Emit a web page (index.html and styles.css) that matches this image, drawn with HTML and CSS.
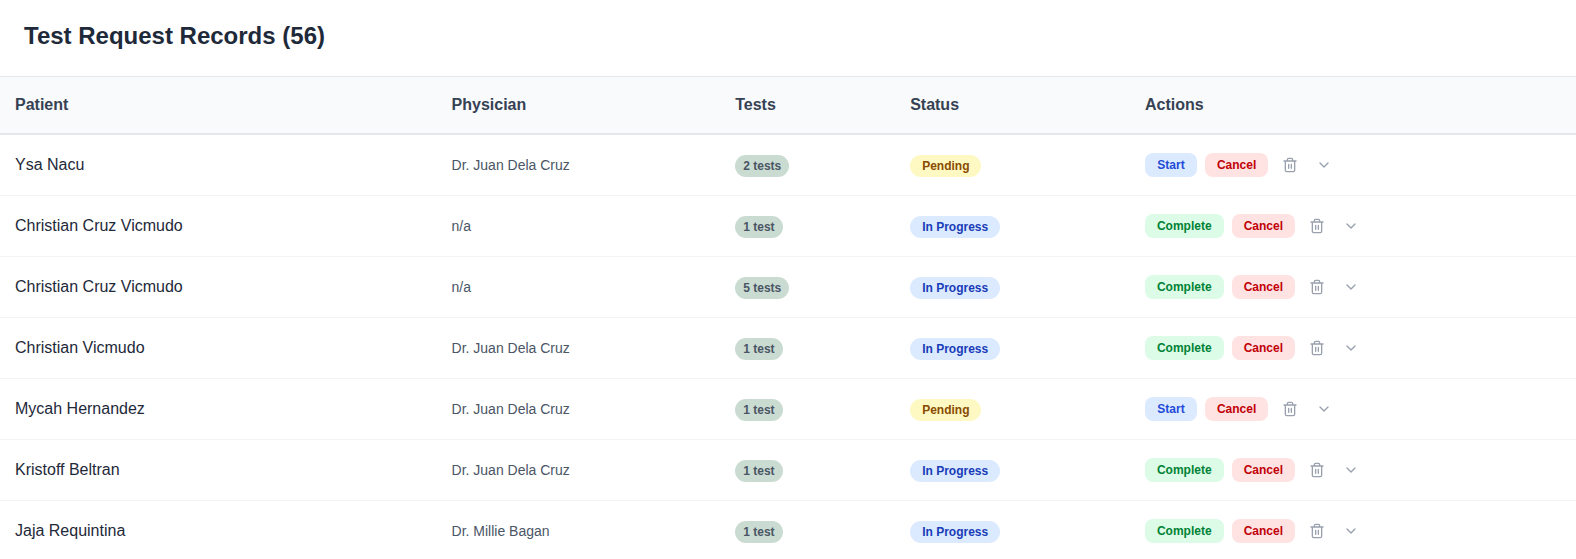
FILE: index.html
```html
<!DOCTYPE html>
<html lang="en">
<head>
<meta charset="utf-8">
<meta name="viewport" content="width=device-width, initial-scale=1">
<title>Test Request Records</title>
<link rel="stylesheet" href="styles.css">
</head>
<body>
<svg class="sprite" aria-hidden="true">
  <symbol id="trash" viewBox="0 0 24 24"><path d="M3 6h18M19 6v14a2 2 0 0 1-2 2H7a2 2 0 0 1-2-2V6M8 6V4a2 2 0 0 1 2-2h4a2 2 0 0 1 2 2v2M10 11v6M14 11v6"/></symbol>
  <symbol id="chevron" viewBox="0 0 24 24"><path d="m6 9 6 6 6-6"/></symbol>
</svg>
<main>
  <header class="page-header"><h1 class="title">Test Request Records (56)</h1></header>
  <table class="records">
    <colgroup><col class="col-patient"><col class="col-physician"><col class="col-tests"><col class="col-status"><col></colgroup>
    <thead>
      <tr><th scope="col">Patient</th><th scope="col">Physician</th><th scope="col">Tests</th><th scope="col">Status</th><th scope="col">Actions</th></tr>
    </thead>
    <tbody id="rows"></tbody>
  </table>
</main>
<script src="records.js"></script>
</body>
</html>
```

FILE: styles.css
```css
* { box-sizing: border-box; }
body {
  margin: 0;
  background: #fff;
  color: #1e2939;
  font-family: "Liberation Sans", Arial, sans-serif;
  font-size: 16px;
  line-height: 24px;
}
.sprite { display: none; }
.page-header { padding: 20px 24px 24px; }
.title { margin: 0; font-size: 24px; line-height: 32px; font-weight: 700; }
.records { width: 100%; table-layout: fixed; border-spacing: 0; text-align: left; }
.col-patient { width: 27.7%; }
.col-physician { width: 18%; }
.col-tests { width: 11.1%; }
.col-status { width: 14.9%; }
th {
  padding: 16px 15px;
  background: #f9fafb;
  border-top: 1px solid #e5e7eb;
  border-bottom: 2px solid #e5e7eb;
  color: #364153;
  font-weight: 700;
}
td { padding: 16px 15px; border-bottom: 1px solid #f3f4f6; vertical-align: middle; }
.physician { color: #4a5565; font-size: 14px; }
.badge {
  display: inline-block;
  border-radius: 12px;
  font-size: 12px;
  line-height: 16px;
  font-weight: 700;
  padding: 3px 12px;
}
.tests { padding: 3px 8px; background: #cadcd2; color: #4a5565; }
.pending { background: #fef9c2; color: #894b00; }
.in-progress { background: #dbeafe; color: #193cb8; }
.actions { display: flex; align-items: center; gap: 8px; }
.button {
  border: 0;
  border-radius: 8px;
  padding: 4px 12px;
  font: 700 12px/16px "Liberation Sans", Arial, sans-serif;
  cursor: pointer;
}
.start { min-width: 52px; background: #dbeafe; color: #1f4bd8; }
.complete { background: #dcfce7; color: #008236; }
.cancel { background: #ffe2e2; color: #c10007; }
.icon-button { display: flex; border: 0; padding: 6px; background: none; color: #99a1af; cursor: pointer; }
.expand { padding: 4px; }
.icon { width: 16px; height: 16px; fill: none; stroke: currentColor; stroke-width: 2; stroke-linecap: round; stroke-linejoin: round; }
```

FILE: records.js
```javascript
const records = [
  ["Ysa Nacu", "Dr. Juan Dela Cruz", 2, "Pending"],
  ["Christian Cruz Vicmudo", "n/a", 1, "In Progress"],
  ["Christian Cruz Vicmudo", "n/a", 5, "In Progress"],
  ["Christian Vicmudo", "Dr. Juan Dela Cruz", 1, "In Progress"],
  ["Mycah Hernandez", "Dr. Juan Dela Cruz", 1, "Pending"],
  ["Kristoff Beltran", "Dr. Juan Dela Cruz", 1, "In Progress"],
  ["Jaja Requintina", "Dr. Millie Bagan", 1, "In Progress"]
];

document.getElementById("rows").innerHTML = records.map(([patient, physician, tests, status]) => {
  const next = status === "Pending" ? "Start" : "Complete";
  return `<tr>
    <td>${patient}</td>
    <td class="physician">${physician}</td>
    <td><span class="badge tests">${tests} ${tests === 1 ? "test" : "tests"}</span></td>
    <td><span class="badge ${status.toLowerCase().replace(" ", "-")}">${status}</span></td>
    <td><div class="actions">
      <button class="button ${next.toLowerCase()}" type="button">${next}</button>
      <button class="button cancel" type="button">Cancel</button>
      <button class="icon-button" type="button" aria-label="Delete"><svg class="icon"><use href="#trash"/></svg></button>
      <button class="icon-button expand" type="button" aria-label="Expand"><svg class="icon"><use href="#chevron"/></svg></button>
    </div></td>
  </tr>`;
}).join("");
```
